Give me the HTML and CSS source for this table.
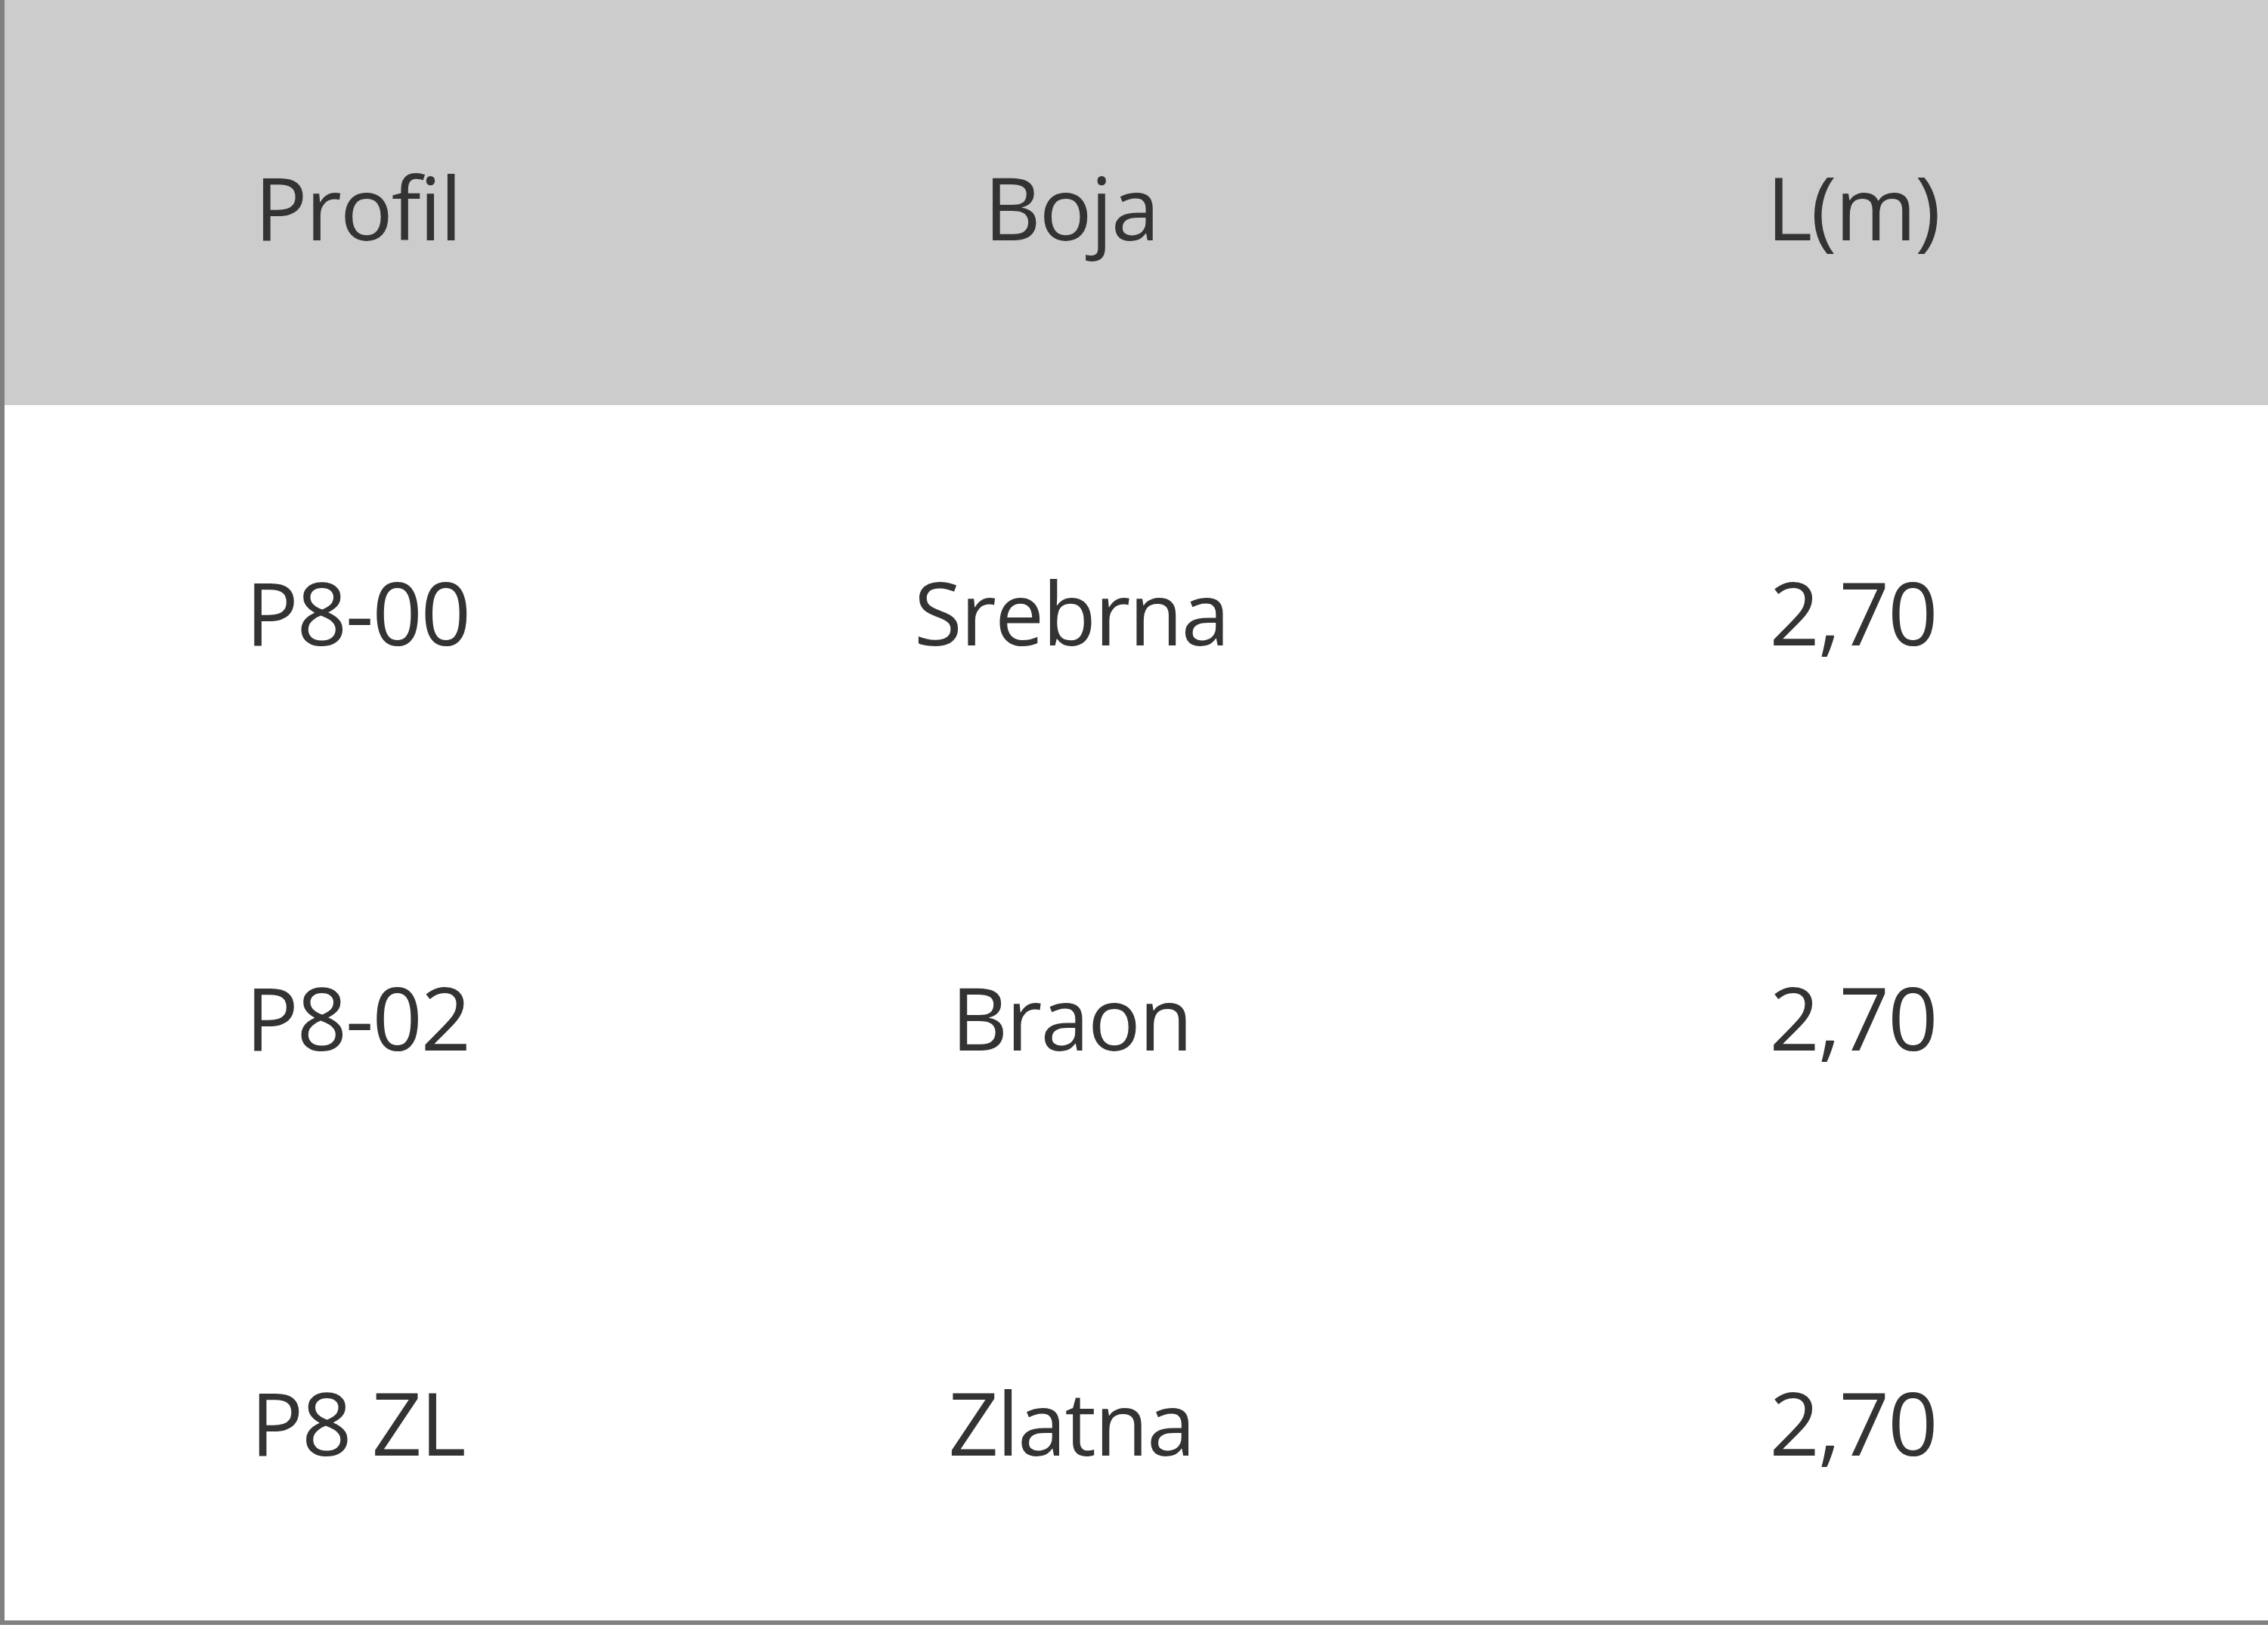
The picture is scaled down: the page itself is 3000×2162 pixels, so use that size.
FILE: index.html
```html
<!DOCTYPE html>
<html lang="sr">
<head>
<meta charset="utf-8">
<title>Profili</title>
<link rel="stylesheet" href="styles.css">
</head>
<body>
<div class="table" role="table">
  <div class="row head" role="row">
    <div class="cell" role="columnheader">Profil</div>
    <div class="cell" role="columnheader">Boja</div>
    <div class="cell" role="columnheader">L(m)</div>
  </div>
  <div class="row" role="row">
    <div class="cell" role="cell">P8-00</div>
    <div class="cell" role="cell">Srebrna</div>
    <div class="cell" role="cell">2,70</div>
  </div>
  <div class="row" role="row">
    <div class="cell" role="cell">P8-02</div>
    <div class="cell" role="cell">Braon</div>
    <div class="cell" role="cell">2,70</div>
  </div>
  <div class="row" role="row">
    <div class="cell" role="cell">P8 ZL</div>
    <div class="cell" role="cell">Zlatna</div>
    <div class="cell" role="cell">2,70</div>
  </div>
</div>
</body>
</html>
```

FILE: styles.css
```css
html, body {
  margin: 0;
  padding: 0;
  background: #ffffff;
  overflow: hidden;
}

.table {
  width: 3002px;
  border-left: 6px solid #808080;
  border-bottom: 6px solid #808080;
  font-family: "Open Sans", "Noto Sans", "Liberation Sans", sans-serif;
  font-size: 116px;
  letter-spacing: -2px;
  color: #333333;
}

.row {
  display: grid;
  grid-template-columns: 934px 954px 1114px;
  height: 536px;
  align-items: center;
}

.head {
  background: #cccccc;
}

.cell {
  text-align: center;
  line-height: 1;
  padding-top: 10px;
}
```
